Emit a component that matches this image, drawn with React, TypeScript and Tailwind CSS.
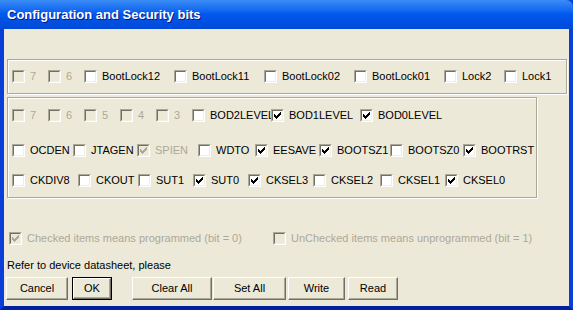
import type { ReactNode } from 'react';

type Item = { label: string; w: string; checked?: boolean; disabled?: boolean };

const groupOne: Item[] = [
  { label: '7', w: 'w-[36px]', disabled: true },
  { label: '6', w: 'w-[36px]', disabled: true },
  { label: 'BootLock12', w: 'w-[90px]' },
  { label: 'BootLock11', w: 'w-[90px]' },
  { label: 'BootLock02', w: 'w-[90px]' },
  { label: 'BootLock01', w: 'w-[90px]' },
  { label: 'Lock2', w: 'w-[60px]' },
  { label: 'Lock1', w: 'w-[60px]' },
];

const groupTwo: Item[][] = [
  [
    { label: '7', w: 'w-[36px]', disabled: true },
    { label: '6', w: 'w-[36px]', disabled: true },
    { label: '5', w: 'w-[36px]', disabled: true },
    { label: '4', w: 'w-[36px]', disabled: true },
    { label: '3', w: 'w-[36px]', disabled: true },
    { label: 'BOD2LEVEL', w: 'w-[79px]' },
    { label: 'BOD1LEVEL', w: 'w-[89px]', checked: true },
    { label: 'BOD0LEVEL', w: 'w-[80px]', checked: true },
  ],
  [
    { label: 'OCDEN', w: 'w-[61px]' },
    { label: 'JTAGEN', w: 'w-[64px]' },
    { label: 'SPIEN', w: 'w-[61px]', checked: true, disabled: true },
    { label: 'WDTO', w: 'w-[57px]' },
    { label: 'EESAVE', w: 'w-[64px]', checked: true },
    { label: 'BOOTSZ1', w: 'w-[71px]', checked: true },
    { label: 'BOOTSZ0', w: 'w-[73px]' },
    { label: 'BOOTRST', w: 'w-[70px]', checked: true },
  ],
  [
    { label: 'CKDIV8', w: 'w-[66px]' },
    { label: 'CKOUT', w: 'w-[60px]' },
    { label: 'SUT1', w: 'w-[55px]' },
    { label: 'SUT0', w: 'w-[55px]', checked: true },
    { label: 'CKSEL3', w: 'w-[65px]', checked: true },
    { label: 'CKSEL2', w: 'w-[67px]' },
    { label: 'CKSEL1', w: 'w-[65px]' },
    { label: 'CKSEL0', w: 'w-[60px]', checked: true },
  ],
];

const Box = ({ checked, disabled }: { checked?: boolean; disabled?: boolean }) => (
  <span
    className={`relative block w-[13px] h-[13px] shrink-0 border border-t-[#aca899] border-l-[#aca899] border-b-white border-r-white ${
      disabled ? 'bg-[#ece9d8]' : 'bg-white'
    }`}
  >
    <span className="absolute inset-0 border border-t-[#716f64] border-l-[#716f64] border-b-[#f1efe2] border-r-[#f1efe2]" />
    {checked && (
      <svg className="absolute top-[-1px] left-[-1px]" width="13" height="13" viewBox="0 0 13 13" shapeRendering="crispEdges">
        <path
          d="M3 5h1v1h1v1h1v-1h1v-1h1v-1h1v-1h1v3h-1v1h-1v1h-1v1h-1v1h-1v-1h-1v-1h-1z"
          fill={disabled ? '#aca899' : '#000'}
        />
      </svg>
    )}
  </span>
);

const Check = ({ label, w, checked, disabled }: Item) => (
  <div className={`flex items-center shrink-0 ${w}`}>
    <Box checked={checked} disabled={disabled} />
    <span className={`ml-[5px] leading-none whitespace-nowrap ${disabled ? 'text-[#aca899]' : 'text-black'}`}>{label}</span>
  </div>
);

const Button = ({ children, w, primary }: { children: ReactNode; w: string; primary?: boolean }) => (
  <button
    className={`h-[23px] shrink-0 ${w} ${primary ? 'border border-black' : ''} bg-[#ece9d8]`}
  >
    <span className="flex h-full w-full items-center justify-center border border-t-white border-l-white border-b-[#716f64] border-r-[#716f64] shadow-[inset_-1px_-1px_0_#aca899]">
      {children}
    </span>
  </button>
);

export default function App() {
  return (
    <div
      className="w-[573px] h-[310px] flex flex-col overflow-hidden bg-[#0b3ed8] text-[11px] text-black"
      style={{ fontFamily: '"Liberation Sans", Arial, sans-serif' }}
    >
      <div className="h-[29px] shrink-0 flex items-center pl-[7px] rounded-tr-[7px] bg-linear-to-b from-[#3a8cf6] via-[#0058ee] to-[#0049d6]">
        <span className="text-[13px] font-bold text-white [text-shadow:1px_1px_0_#0a1883]">
          Configuration and Security bits
        </span>
      </div>

      <div className="flex-1 flex border-l-[4px] border-r-[4px] border-b-[4px] border-l-[#0b3ed8] border-r-[#0b3ed8] border-b-[#00209e]">
        <div className="flex-1 flex flex-col bg-[#ece9d8]">
          <div className="ml-[3px] mr-[2px] mt-[30px] h-[35px] flex items-center pl-[4px] border border-[#aca899] shadow-[inset_1px_1px_0_#fff,1px_1px_0_#fff]">
            {groupOne.map((it) => (
              <Check key={it.label} {...it} />
            ))}
          </div>

          <div className="ml-[3px] w-[530px] mt-[3px] h-[101px] flex flex-col pl-[4px] pt-[11px] border border-[#aca899] shadow-[inset_1px_1px_0_#fff,1px_1px_0_#fff]">
            <div className="flex h-[13px] items-center">
              {groupTwo[0].map((it) => (
                <Check key={it.label} {...it} />
              ))}
            </div>
            <div className="flex h-[13px] items-center mt-[22px]">
              {groupTwo[1].map((it) => (
                <Check key={it.label} {...it} />
              ))}
            </div>
            <div className="flex h-[13px] items-center mt-[17px]">
              {groupTwo[2].map((it) => (
                <Check key={it.label} {...it} />
              ))}
            </div>
          </div>

          <div className="flex items-center h-[13px] mt-[34px] pl-[5px]">
            <Check label="Checked items means programmed (bit = 0)" w="w-[264px]" checked disabled />
            <Check label="UnChecked items means unprogrammed (bit = 1)" w="w-[260px]" disabled />
          </div>

          <div className="mt-[15px] pl-[3px] leading-none">Refer to device datasheet, please</div>

          <div className="flex mt-[6px] pl-[2px]">
            <Button w="w-[62px]">Cancel</Button>
            <div className="ml-[4px]">
              <Button w="w-[40px]" primary>
                OK
              </Button>
            </div>
            <div className="ml-[20px] flex gap-[1px]">
              <Button w="w-[80px]">Clear All</Button>
              <Button w="w-[73px]">Set All</Button>
            </div>
            <div className="ml-[2px] flex gap-[3px]">
              <Button w="w-[57px]">Write</Button>
              <Button w="w-[50px]">Read</Button>
            </div>
          </div>
        </div>
      </div>
    </div>
  );
}
